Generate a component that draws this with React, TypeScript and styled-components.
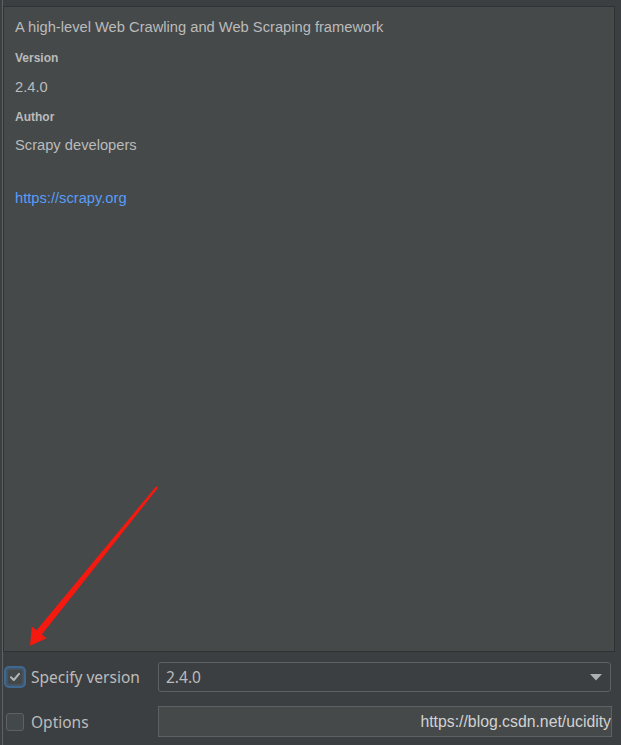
import React from "react";
import styled, { createGlobalStyle } from "styled-components";

const Global = createGlobalStyle`
  html, body { margin: 0; padding: 0; background: #3c3f41; }
  * { box-sizing: border-box; }
`;

const Window = styled.div`
  position: relative;
  width: 621px;
  height: 745px;
  background: #3c3f41;
  padding-left: 2px;
  overflow: hidden;
`;

const Frame = styled.div`
  height: 100%;
  border-left: 1px solid #5f6264;
  padding: 6px 6px 0 0;
  display: flex;
  flex-direction: column;
`;

const Panel = styled.div`
  height: 646px;
  flex: none;
  background: #45494a;
  border: 1px solid #2f3133;
  padding: 10px 11px 0 11px;
  font-family: "Liberation Sans", Arial, sans-serif;
  color: #bbbbbb;
`;

const Line = styled.div<{ $gap: number; $bold?: boolean; $link?: boolean }>`
  margin-top: ${(p) => p.$gap}px;
  font-size: ${(p) => (p.$bold ? 12 : 14.7)}px;
  line-height: ${(p) => (p.$bold ? 16 : 20)}px;
  font-weight: ${(p) => (p.$bold ? 700 : 400)};
  color: ${(p) => (p.$link ? "#589df6" : "#bbbbbb")};
  white-space: nowrap;
`;

const Form = styled.div`
  margin-top: 10px;
  display: flex;
  flex-direction: column;
  gap: 14px;
  padding-right: 4px;
`;

const Row = styled.div<{ $h: number }>`
  display: grid;
  grid-template-columns: 155px 1fr;
  height: ${(p) => p.$h}px;
  align-items: center;
`;

const CheckGroup = styled.label`
  display: flex;
  align-items: center;
  padding-left: 1px;
  font-family: "Noto Sans", "Open Sans", sans-serif;
  font-size: 15.5px;
  color: #bbbbbb;
`;

const CheckSlot = styled.span`
  width: 22px;
  height: 22px;
  display: flex;
  align-items: center;
  justify-content: center;
  margin-right: 5px;
`;

const FocusRing = styled.span`
  width: 22px;
  height: 22px;
  border: 2px solid #3f6890;
  border-radius: 5px;
  display: flex;
  align-items: center;
  justify-content: center;
  background: #3e5870;
`;

const Box = styled.span<{ $checked?: boolean }>`
  width: ${(p) => (p.$checked ? 16 : 18)}px;
  height: ${(p) => (p.$checked ? 16 : 18)}px;
  border: 1px solid ${(p) => (p.$checked ? "#4a5257" : "#5e6163")};
  border-radius: 3px;
  background: #43494a;
  display: flex;
  align-items: center;
  justify-content: center;
`;

const Combo = styled.div`
  height: 30px;
  border: 1px solid #5e6163;
  border-radius: 3px;
  background: #3c3f41;
  display: flex;
  align-items: center;
  justify-content: space-between;
  padding: 0 8px 0 7px;
  font-family: "Noto Sans", "Open Sans", sans-serif;
  font-size: 15.5px;
  color: #bbbbbb;
`;

const TextField = styled.div`
  height: 31px;
  border: 1px solid #5e6163;
  background: #45494a;
  margin-right: -1px;
`;

const Watermark = styled.div`
  position: absolute;
  right: 10px;
  top: 712px;
  font-family: "Liberation Sans", Arial, sans-serif;
  font-size: 15.8px;
  line-height: 20px;
  color: #d2d2d2;
  white-space: nowrap;
`;

const ArrowOverlay = styled.svg`
  position: absolute;
  left: 0;
  top: 0;
  pointer-events: none;
`;

export default function App() {
  return (
    <Window>
      <Global />
      <Frame>
        <Panel>
          <Line $gap={0}>A high-level Web Crawling and Web Scraping framework</Line>
          <Line $gap={13} $bold>Version</Line>
          <Line $gap={11}>2.4.0</Line>
          <Line $gap={12} $bold>Author</Line>
          <Line $gap={10}>Scrapy developers</Line>
          <Line $gap={33} $link>https://scrapy.org</Line>
        </Panel>
        <Form>
          <Row $h={30}>
            <CheckGroup>
              <CheckSlot>
                <FocusRing>
                  <Box $checked>
                    <svg width="12" height="12" viewBox="0 0 12 12">
                      <polyline
                        points="2,6.2 4.8,9 10,2.8"
                        fill="none"
                        stroke="#b4b6b8"
                        strokeWidth="2"
                        strokeLinecap="round"
                        strokeLinejoin="round"
                      />
                    </svg>
                  </Box>
                </FocusRing>
              </CheckSlot>
              Specify version
            </CheckGroup>
            <Combo>
              <span>2.4.0</span>
              <svg width="12" height="8" viewBox="0 0 12 8">
                <polygon points="0,1 12,1 6,7.5" fill="#aeb0b2" />
              </svg>
            </Combo>
          </Row>
          <Row $h={31}>
            <CheckGroup>
              <CheckSlot>
                <Box />
              </CheckSlot>
              Options
            </CheckGroup>
            <TextField />
          </Row>
        </Form>
      </Frame>
      <Watermark>https://blog.csdn.net/ucidity</Watermark>
      <ArrowOverlay width="621" height="745" viewBox="0 0 621 745">
        <polygon
          points="156.2,486.2 158,487.8 41.8,634.4 46.7,638.2 30,645.8 31.8,626.5 36.6,630.2"
          fill="#f5190f"
        />
      </ArrowOverlay>
    </Window>
  );
}
